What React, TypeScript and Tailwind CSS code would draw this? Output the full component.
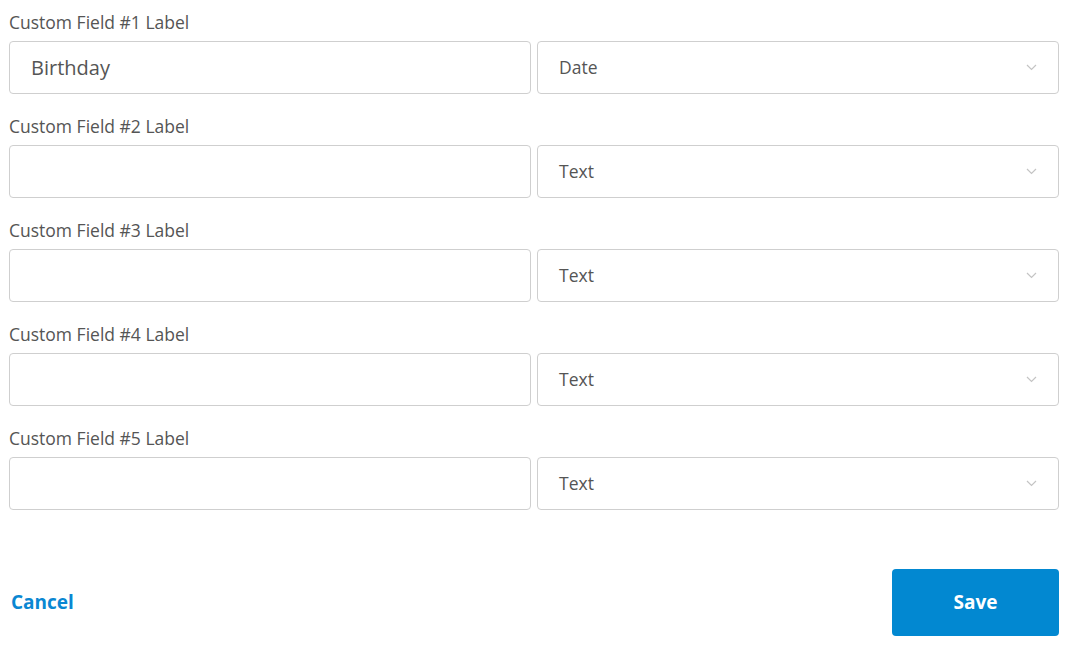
import React from "react";

const rows = [
  { label: "Custom Field #1 Label", value: "Birthday", type: "Date" },
  { label: "Custom Field #2 Label", value: "", type: "Text" },
  { label: "Custom Field #3 Label", value: "", type: "Text" },
  { label: "Custom Field #4 Label", value: "", type: "Text" },
  { label: "Custom Field #5 Label", value: "", type: "Text" },
];

function Chevron() {
  return (
    <svg width="11" height="7" viewBox="0 0 11 7" fill="none">
      <path d="M1 1l4.5 4.5L10 1" stroke="#c4c4c4" strokeWidth="1.2" />
    </svg>
  );
}

export default function App() {
  return (
    <div
      className="w-[1070px] h-[665px] bg-white pl-[9px] pr-[11px] pt-[10px]"
      style={{ fontFamily: '"Open Sans", "Noto Sans", sans-serif' }}
    >
      <div className="flex flex-col gap-[20px]">
        {rows.map((r) => (
          <div key={r.label} className="flex flex-col">
            <label className="text-[17.5px] leading-[24px] text-[#555555] mb-[7px]">{r.label}</label>
            <div className="grid grid-cols-2 gap-[6px]">
              <div className="h-[53px] border border-[#cfcfcf] rounded-[4px] flex items-center pl-[21px] text-[20px] text-[#555555]">
                {r.value}
              </div>
              <div className="h-[53px] border border-[#cfcfcf] rounded-[4px] flex items-center justify-between pl-[21px] pr-[21px] text-[17.5px] text-[#555555]">
                <span>{r.type}</span>
                <Chevron />
              </div>
            </div>
          </div>
        ))}
      </div>
      <div className="flex items-center justify-between mt-[59px]">
        <button className="text-[19px] font-bold text-[#0a87d2] pl-[2px]">Cancel</button>
        <button className="w-[167px] h-[67px] rounded-[4px] bg-[#0288d1] text-white text-[19px] font-bold">
          Save
        </button>
      </div>
    </div>
  );
}
